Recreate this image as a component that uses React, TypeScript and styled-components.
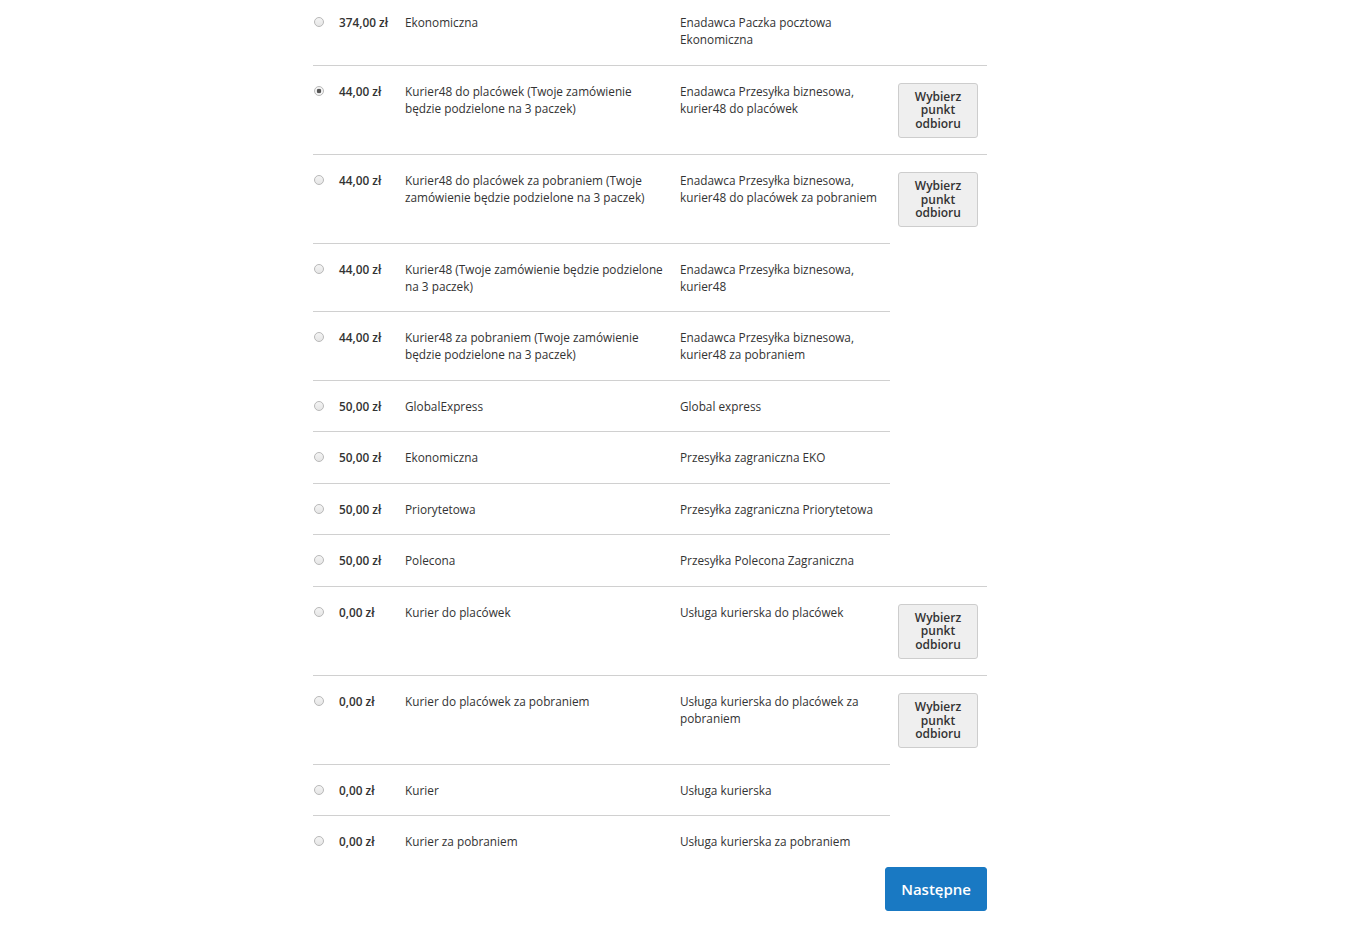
import React from "react";
import styled, { createGlobalStyle } from "styled-components";

type Method = {
  price: string;
  method: string;
  carrier: string;
  pickup?: boolean;
  checked?: boolean;
};

const methods: Method[] = [
  { price: "374,00 zł", method: "Ekonomiczna", carrier: "Enadawca Paczka pocztowa Ekonomiczna" },
  {
    price: "44,00 zł",
    method: "Kurier48 do placówek (Twoje zamówienie będzie podzielone na 3 paczek)",
    carrier: "Enadawca Przesyłka biznesowa, kurier48 do placówek",
    pickup: true,
    checked: true,
  },
  {
    price: "44,00 zł",
    method: "Kurier48 do placówek za pobraniem (Twoje zamówienie będzie podzielone na 3 paczek)",
    carrier: "Enadawca Przesyłka biznesowa, kurier48 do placówek za pobraniem",
    pickup: true,
  },
  {
    price: "44,00 zł",
    method: "Kurier48 (Twoje zamówienie będzie podzielone na 3 paczek)",
    carrier: "Enadawca Przesyłka biznesowa, kurier48",
  },
  {
    price: "44,00 zł",
    method: "Kurier48 za pobraniem (Twoje zamówienie będzie podzielone na 3 paczek)",
    carrier: "Enadawca Przesyłka biznesowa, kurier48 za pobraniem",
  },
  { price: "50,00 zł", method: "GlobalExpress", carrier: "Global express" },
  { price: "50,00 zł", method: "Ekonomiczna", carrier: "Przesyłka zagraniczna EKO" },
  { price: "50,00 zł", method: "Priorytetowa", carrier: "Przesyłka zagraniczna Priorytetowa" },
  { price: "50,00 zł", method: "Polecona", carrier: "Przesyłka Polecona Zagraniczna" },
  { price: "0,00 zł", method: "Kurier do placówek", carrier: "Usługa kurierska do placówek", pickup: true },
  {
    price: "0,00 zł",
    method: "Kurier do placówek za pobraniem",
    carrier: "Usługa kurierska do placówek za pobraniem",
    pickup: true,
  },
  { price: "0,00 zł", method: "Kurier", carrier: "Usługa kurierska" },
  { price: "0,00 zł", method: "Kurier za pobraniem", carrier: "Usługa kurierska za pobraniem" },
];

const App = () => {
  return (
    <>
      <GlobalStyle />
      <Wrapper>
        <Table>
          <colgroup>
            <col style={{ width: 26 }} />
            <col style={{ width: 66 }} />
            <col style={{ width: 275 }} />
            <col style={{ width: 210 }} />
            <col style={{ width: 97 }} />
          </colgroup>
          <tbody>
            {methods.map((m, i) => (
              <tr key={i}>
                <RadioCell>
                  <Radio $checked={m.checked} />
                </RadioCell>
                <PriceCell>{m.price}</PriceCell>
                <TextCell $gap={11}>{m.method}</TextCell>
                <TextCell $gap={6}>{m.carrier}</TextCell>
                {m.pickup && (
                  <ButtonCell>
                    <PickupButton type="button">Wybierz punkt odbioru</PickupButton>
                  </ButtonCell>
                )}
              </tr>
            ))}
          </tbody>
        </Table>
        <Actions>
          <NextButton type="button">Następne</NextButton>
        </Actions>
      </Wrapper>
    </>
  );
};

export default App;

const GlobalStyle = createGlobalStyle`
  html, body {
    margin: 0;
    background: #fff;
    font-family: "Open Sans", "Liberation Sans", sans-serif;
    color: #333;
  }
`;

const Wrapper = styled.div`
  width: 674px;
  margin: -4px 0 0 313px;
`;

const Table = styled.table`
  width: 674px;
  table-layout: fixed;
  border-collapse: collapse;
  font-size: 11.8px;
  line-height: 17.14px;

  td {
    border-top: 1px solid #d0d0d0;
    vertical-align: top;
    padding: 17px 0 16.3px 0;
  }
`;

const RadioCell = styled.td`
  && {
    padding-left: 1px;
  }
`;

const Radio = styled.span<{ $checked?: boolean }>`
  display: block;
  box-sizing: border-box;
  width: 10px;
  height: 10px;
  margin-top: 3px;
  border-radius: 50%;
  border: 1px solid #b9b9b9;
  background: ${(p) =>
    p.$checked
      ? "radial-gradient(circle, #555 0 2px, #f4f4f4 2.6px)"
      : "linear-gradient(#f4f4f4, #e6e6e6)"};
`;

const PriceCell = styled.td`
  font-weight: 600;
  white-space: nowrap;
`;

const TextCell = styled.td<{ $gap: number }>`
  && {
    padding-right: ${(p) => p.$gap}px;
  }
`;

const ButtonCell = styled.td`
  && {
    padding: 17px 9px 16.3px 8px;
  }
`;

const PickupButton = styled.button`
  display: block;
  box-sizing: border-box;
  width: 100%;
  height: 55px;
  padding: 6px 6px;
  border: 1px solid #cdcdcd;
  border-radius: 3px;
  background: #efefef;
  color: #333;
  font-family: "Open Sans", "Liberation Sans", sans-serif;
  font-size: 12px;
  font-weight: 600;
  line-height: 13.5px;
  cursor: pointer;
`;

const Actions = styled.div`
  display: flex;
  justify-content: flex-end;
`;

const NextButton = styled.button`
  height: 44px;
  padding: 0 15px;
  border: 1px solid #1979c3;
  border-radius: 3px;
  background: #1979c3;
  color: #fff;
  font-family: "Open Sans", "Liberation Sans", sans-serif;
  font-size: 15px;
  font-weight: 600;
  cursor: pointer;
`;
